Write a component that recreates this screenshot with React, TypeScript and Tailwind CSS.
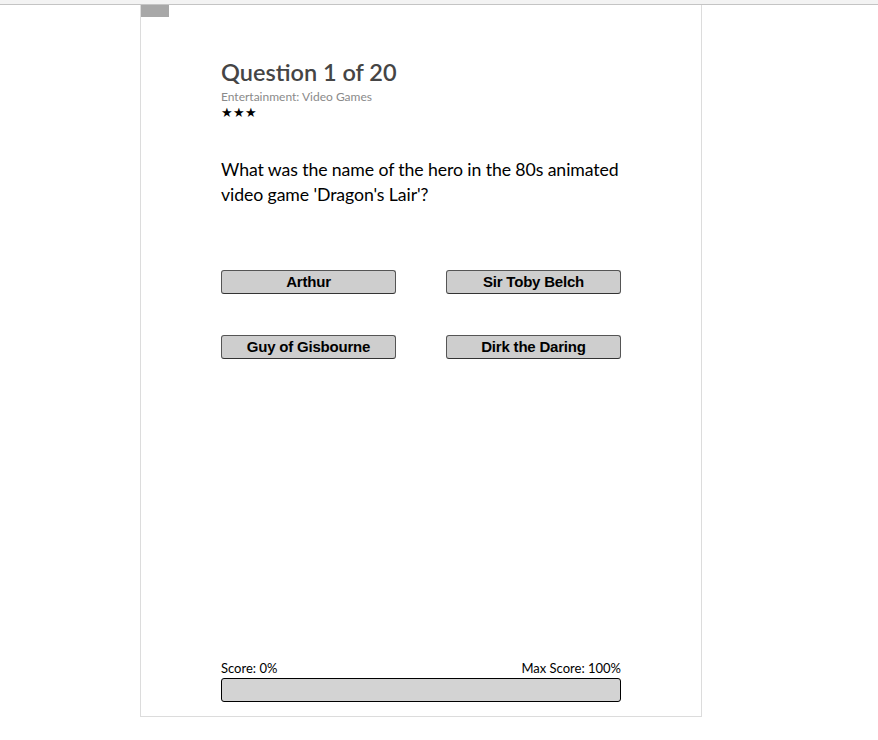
import React from "react";

const seg = { fontFamily: 'Lato, "Noto Sans", sans-serif' };

export default function App() {
  const answers = ["Arthur", "Sir Toby Belch", "Guy of Gisbourne", "Dirk the Daring"];
  return (
    <div className="min-h-[740px] w-[878px] bg-white" style={seg}>
      <div className="h-[5px] bg-[#f3f3f3] border-b border-[#c4c4c4]" />
      <div className="ml-[140px] flex h-[712px] w-[562px] flex-col border-x border-b border-[#dcdcdc]">
        <div className="h-[12px] w-[28px] bg-[#a8a8a8]" />
        <div className="flex flex-1 flex-col pl-[80px] pr-[80px]">
          <h1 className="mt-[40px] text-[23.5px] font-semibold leading-[30px] text-[#454545]">Question 1 of 20</h1>
          <div className="mt-[3px] text-[12px] leading-[14px] text-[#8a8a8a]">Entertainment: Video Games</div>
          <div className="mt-[1px] text-[12.5px] leading-[15px] text-black">★★★</div>
          <p className="mt-[37px] text-[17.7px] leading-[25px] tracking-[-0.1px] text-black">
            What was the name of the hero in the 80s animated video game 'Dragon's Lair'?
          </p>
          <div className="mt-[63px] grid grid-cols-2 gap-x-[50px] gap-y-[41px]">
            {answers.map((a) => (
              <button
                key={a}
                className="h-[24px] w-[175px] rounded-[3px] border border-[#555555] border-b-[#333333] bg-[#cecece] text-[15px] font-bold leading-[22px] tracking-[-0.2px] text-black"
                style={{ fontFamily: '"Liberation Sans", Arial, sans-serif' }}
              >
                {a}
              </button>
            ))}
          </div>
          <div className="flex-1" />
          <div className="mb-[14px]">
            <div className="flex justify-between text-[13px] leading-[16px] text-black">
              <span>Score: 0%</span>
              <span>Max Score: 100%</span>
            </div>
            <div className="mt-[2px] h-[24px] w-[400px] rounded-[3px] border border-black bg-[#d3d3d3]" />
          </div>
        </div>
      </div>
    </div>
  );
}
